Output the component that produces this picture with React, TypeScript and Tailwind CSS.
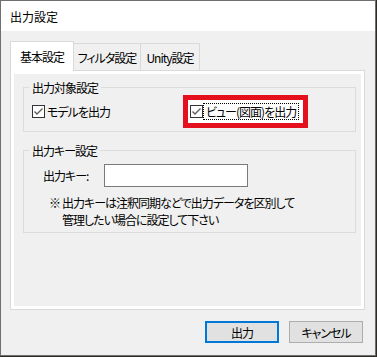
const CheckBox = () => (
    <span className="flex w-[13px] h-[13px] shrink-0 border border-[#333333] bg-white">
        <svg width="11" height="11" viewBox="0 0 11 11">
            <polyline points="1.5,5.5 4,8 9.5,2.5" fill="none" stroke="#5c5c5c" strokeWidth="1.4" />
        </svg>
    </span>
)

const Tab = ({ label, active, w }: { label: string; active?: boolean; w: string }) => (
    <div
        className={`${w} flex items-center justify-center border-[#d9d9d9] ${
            active ? 'relative z-10 h-[30px] -mb-px bg-white border-t border-l border-r' : 'h-[27px] bg-[#f0f0f0] border-t border-r'
        }`}
    >
        {label}
    </div>
)

const App = () => {
    return (
        <div className="w-[377px] h-[357px] bg-[#2e2a26] font-['Noto_Sans_CJK_JP',sans-serif] [font-feature-settings:'palt'] text-[12px] leading-[15px] text-black">
            <div className="w-[376px] h-[356px] border border-[#6f6f6f] bg-[#f0f0f0] flex flex-col">
                <div className="h-[30px] bg-white pl-[9px] flex items-center">出力設定</div>

                <div className="px-[9px] pt-[10px] flex flex-col tracking-[-1px]">
                    <div className="flex items-end h-[29px]">
                        <Tab label="基本設定" active w="w-[64px]" />
                        <Tab label="フィルタ設定" w="w-[67px]" />
                        <Tab label="Unity設定" w="w-[59px]" />
                    </div>

                    <div className="w-[355px] h-[240px] border border-[#d9d9d9] bg-white p-[3px]">
                        <div className="h-full bg-[#f0f0f0] pt-[6px] pl-[9px] pr-[5px]">
                            <fieldset className="border border-[#dcdcdc] pl-[8px] pb-[3px]">
                                <legend className="-ml-[3px] px-[3px] leading-[15px]">出力対象設定</legend>
                                <div className="flex items-center h-[33px]">
                                    <CheckBox />
                                    <span className="ml-[2px] w-[136px]">モデルを出力</span>
                                    <div className="flex items-center w-[125px] h-[33px] border-[5px] border-[#e5101d] bg-white pl-[2px]">
                                        <CheckBox />
                                        <span className="h-[17px] px-[2px] flex items-center border border-dotted border-black whitespace-nowrap">
                                            ビュー(図面)を出力
                                        </span>
                                    </div>
                                </div>
                            </fieldset>

                            <fieldset className="mt-[11px] border border-[#dcdcdc] pl-[19px] pb-[4px]">
                                <legend className="-ml-[14px] px-[3px] leading-[15px]">出力キー設定</legend>
                                <div className="flex items-center mt-[6px]">
                                    <span className="w-[61px]">出力キー:</span>
                                    <div className="w-[144px] h-[23px] border border-[#7a7a7a] bg-white" />
                                </div>
                                <div className="flex mt-[7px] ml-[6px] leading-[17px] whitespace-nowrap">
                                    <span className="w-[13px]">※</span>
                                    <span>
                                        出力キーは注釈同期などで出力データを区別して
                                        <br />
                                        管理したい場合に設定して下さい
                                    </span>
                                </div>
                            </fieldset>
                        </div>
                    </div>

                    <div className="flex justify-end gap-[10px] pr-[3px] mt-[11px]">
                        <button className="w-[74px] h-[22px] border-2 border-[#0078d7] bg-[#e1e1e1] flex items-center justify-center">
                            出力
                        </button>
                        <button className="w-[74px] h-[22px] border border-[#adadad] bg-[#e1e1e1] flex items-center justify-center">
                            キャンセル
                        </button>
                    </div>
                </div>
            </div>
        </div>
    )
}

export default App
